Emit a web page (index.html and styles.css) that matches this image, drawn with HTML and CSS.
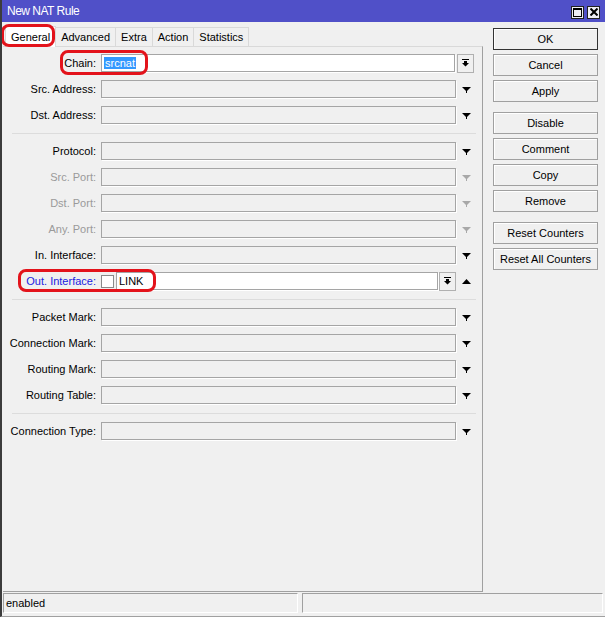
FILE: index.html
```html
<!DOCTYPE html>
<html lang="en">
<head>
    <meta charset="UTF-8">
    <title>New NAT Rule</title>
    <link rel="stylesheet" href="styles.css">
</head>
<body>
    <div class="window">
        <div class="titlebar">
            <span class="title">New NAT Rule</span>
            <div class="title-btns">
                <span class="tbtn">
                    <svg width="9" height="9" viewBox="0 0 9 9"><path d="M0 0h9v9H0z M1 2v6h7V2z" fill="#000" fill-rule="evenodd"/></svg>
                </span>
                <span class="tbtn">
                    <svg width="8" height="8" viewBox="0 0 8 8"><path d="M0.5 0.5l7 7M7.5 0.5l-7 7" stroke="#000" stroke-width="2"/></svg>
                </span>
            </div>
        </div>

        <div class="main">
            <div class="editor">
                <div class="tabs">
                    <span class="tab active">General</span>
                    <span class="tab">Advanced</span>
                    <span class="tab">Extra</span>
                    <span class="tab">Action</span>
                    <span class="tab">Statistics</span>
                </div>
                <div class="panel">
                    <div class="row">
                        <label>Chain:</label>
                        <div class="field wide">
                            <div class="box white"><span class="sel">srcnat</span></div>
                            <span class="drop-btn"><svg width="7" height="8" viewBox="0 0 7 8"><path d="M0 0h7v1H0z M2 2h3v2h2L3.5 7.5 0 4h2z"/></svg></span>
                        </div>
                    </div>
                    <div class="row">
                        <label>Src. Address:</label>
                        <div class="box"></div>
                        <span class="arrow"><svg width="9" height="6" viewBox="0 0 9 6"><path d="M0 0h9L5 4v2H4V4z"/></svg></span>
                    </div>
                    <div class="row">
                        <label>Dst. Address:</label>
                        <div class="box"></div>
                        <span class="arrow"><svg width="9" height="6" viewBox="0 0 9 6"><path d="M0 0h9L5 4v2H4V4z"/></svg></span>
                    </div>

                    <div class="sep"></div>

                    <div class="row">
                        <label>Protocol:</label>
                        <div class="box"></div>
                        <span class="arrow"><svg width="9" height="6" viewBox="0 0 9 6"><path d="M0 0h9L5 4v2H4V4z"/></svg></span>
                    </div>
                    <div class="row disabled">
                        <label>Src. Port:</label>
                        <div class="box"></div>
                        <span class="arrow"><svg width="9" height="6" viewBox="0 0 9 6"><path d="M0 0h9L5 4v2H4V4z"/></svg></span>
                    </div>
                    <div class="row disabled">
                        <label>Dst. Port:</label>
                        <div class="box"></div>
                        <span class="arrow"><svg width="9" height="6" viewBox="0 0 9 6"><path d="M0 0h9L5 4v2H4V4z"/></svg></span>
                    </div>
                    <div class="row disabled">
                        <label>Any. Port:</label>
                        <div class="box"></div>
                        <span class="arrow"><svg width="9" height="6" viewBox="0 0 9 6"><path d="M0 0h9L5 4v2H4V4z"/></svg></span>
                    </div>
                    <div class="row">
                        <label>In. Interface:</label>
                        <div class="box"></div>
                        <span class="arrow"><svg width="9" height="6" viewBox="0 0 9 6"><path d="M0 0h9L5 4v2H4V4z"/></svg></span>
                    </div>
                    <div class="row">
                        <label class="blue">Out. Interface:</label>
                        <div class="field">
                            <span class="check"></span>
                            <div class="box white">LINK</div>
                            <span class="drop-btn"><svg width="7" height="8" viewBox="0 0 7 8"><path d="M0 0h7v1H0z M2 2h3v2h2L3.5 7.5 0 4h2z"/></svg></span>
                        </div>
                        <span class="arrow"><svg width="9" height="6" viewBox="0 0 9 6"><path d="M4.5 0L9 5H0z"/></svg></span>
                    </div>

                    <div class="sep"></div>

                    <div class="row">
                        <label>Packet Mark:</label>
                        <div class="box"></div>
                        <span class="arrow"><svg width="9" height="6" viewBox="0 0 9 6"><path d="M0 0h9L5 4v2H4V4z"/></svg></span>
                    </div>
                    <div class="row">
                        <label>Connection Mark:</label>
                        <div class="box"></div>
                        <span class="arrow"><svg width="9" height="6" viewBox="0 0 9 6"><path d="M0 0h9L5 4v2H4V4z"/></svg></span>
                    </div>
                    <div class="row">
                        <label>Routing Mark:</label>
                        <div class="box"></div>
                        <span class="arrow"><svg width="9" height="6" viewBox="0 0 9 6"><path d="M0 0h9L5 4v2H4V4z"/></svg></span>
                    </div>
                    <div class="row">
                        <label>Routing Table:</label>
                        <div class="box"></div>
                        <span class="arrow"><svg width="9" height="6" viewBox="0 0 9 6"><path d="M0 0h9L5 4v2H4V4z"/></svg></span>
                    </div>

                    <div class="sep"></div>

                    <div class="row">
                        <label>Connection Type:</label>
                        <div class="box"></div>
                        <span class="arrow"><svg width="9" height="6" viewBox="0 0 9 6"><path d="M0 0h9L5 4v2H4V4z"/></svg></span>
                    </div>
                </div>
            </div>

            <div class="actions">
                <button class="btn default">OK</button>
                <button class="btn">Cancel</button>
                <button class="btn">Apply</button>
                <button class="btn group">Disable</button>
                <button class="btn">Comment</button>
                <button class="btn">Copy</button>
                <button class="btn">Remove</button>
                <button class="btn group">Reset Counters</button>
                <button class="btn">Reset All Counters</button>
            </div>
        </div>

        <div class="status">
            <div class="cell first">enabled</div>
            <div class="cell second"></div>
        </div>

        <!-- red highlight marks drawn over the screenshot -->
        <div class="mark mark-tab"></div>
        <div class="mark mark-chain"></div>
        <div class="mark mark-out"></div>
    </div>
</body>
</html>
```

FILE: styles.css
```css
body {
    margin: 0;
    font-family: "Liberation Sans", Arial, sans-serif;
    font-size: 11px;
    color: #000;
}
.window {
    position: relative;
    width: 605px;
    height: 617px;
    box-sizing: border-box;
    overflow: hidden;
    background-color: #f0f0f0;
    border-left: 2px solid #3c3c3c;
    border-bottom: 1px solid #a0a0a0;
}

/* title bar */
.titlebar {
    display: flex;
    align-items: center;
    height: 22px;
    margin-left: -2px;
    padding: 0 5px 0 7px;
    background-color: #5050c8;
    color: #fff;
}
.title {
    font-size: 12px;
    letter-spacing: -0.5px;
}
.title-btns {
    display: flex;
    gap: 3px;
    margin-left: auto;
    padding-top: 2px;
}
.tbtn {
    display: flex;
    align-items: center;
    justify-content: center;
    width: 11px;
    height: 11px;
    border: 1px solid #222;
    background-color: #eeeef4;
}

/* main area */
.main {
    display: flex;
    height: 570px;
}
.editor {
    width: 480px;
    margin-left: 1px;
    padding-top: 5px;
}
.tabs {
    display: flex;
    height: 19px;
    padding-left: 2px;
}
.tab {
    display: flex;
    align-items: center;
    padding: 0 5px;
    margin-right: -1px;
    border: 1px solid #d9d9d9;
    border-bottom: none;
    background-color: #f0f0f0;
}
.tab.active {
    position: relative;
    z-index: 1;
    height: 20px;
    margin-top: -1px;
    background-color: #fff;
}
.panel {
    height: 546px;
    box-sizing: border-box;
    padding-top: 3px;
    border-top: 1px solid #d9d9d9;
    border-right: 1px solid #a0a0a0;
    border-bottom: 1px solid #a0a0a0;
}

/* form rows */
.row {
    display: grid;
    grid-template-columns: 98px 355px 20px;
    align-items: center;
    height: 26px;
}
.row label {
    text-align: right;
    padding-right: 5px;
    white-space: nowrap;
}
.row label.blue {
    color: #1a1ae0;
}
.row.disabled label {
    color: #9a9a9a;
}
.row.disabled .arrow svg {
    fill: #a8a8a8;
}
.box {
    height: 18px;
    box-sizing: border-box;
    border: 1px solid #a5a5a5;
    background-color: #f0f0f0;
    box-shadow: 1px 1px 0 #fff;
    padding: 1px 2px;
    line-height: 14px;
}
.box.white {
    background-color: #fff;
}
.sel {
    background-color: #3399ff;
    color: #fff;
    padding: 0 1px;
}
.arrow {
    display: flex;
    justify-content: center;
    padding-top: 1px;
}
.field {
    display: flex;
    align-items: center;
}
.field .box {
    flex: 1;
}
.field.wide {
    grid-column: 2 / 4;
}
.field.wide .box {
    flex: none;
    width: 354px;
}
.drop-btn {
    display: flex;
    align-items: center;
    justify-content: center;
    width: 15px;
    height: 17px;
    margin-left: 2px;
    border: 1px solid #b0b0b0;
    background-color: #f0f0f0;
}
.field:not(.wide) .drop-btn {
    margin-left: 1px;
}
.check {
    width: 13px;
    height: 13px;
    box-sizing: border-box;
    margin-right: 2px;
    border: 1px solid #8a8a8a;
    background-color: #fff;
}
.sep {
    display: flex;
    align-items: center;
    height: 10px;
    padding: 0 6px 0 9px;
}
.sep::before {
    content: "";
    flex: 1;
    height: 1px;
    background-color: #dcdcdc;
}

/* buttons on the right */
.actions {
    display: flex;
    flex-direction: column;
    width: 105px;
    margin-left: 10px;
    padding-top: 6px;
}
.btn {
    height: 22px;
    margin-bottom: 4px;
    border: 1px solid #a0a0a0;
    background-color: #f0f0f0;
    box-shadow: inset 1px 1px 0 #fff;
    font-family: inherit;
    font-size: 11px;
    color: #000;
    padding: 0;
}
.btn.default {
    border-color: #333;
}
.btn.group {
    margin-top: 6px;
}

/* status bar */
.status {
    display: flex;
    padding-top: 1px;
}
.cell {
    height: 20px;
    box-sizing: border-box;
    border: 1px solid #a0a0a0;
    border-right-color: #fff;
    border-bottom-color: #fff;
    padding-left: 2px;
    line-height: 18px;
}
.cell.first {
    width: 295px;
    margin-left: 1px;
}
.cell.second {
    width: 301px;
    margin-left: 4px;
}

/* red highlight marks */
.mark {
    position: absolute;
    box-sizing: border-box;
    border: 3px solid #e3131b;
    border-radius: 8px;
    z-index: 2;
}
.mark-tab {
    left: -1px;
    top: 24px;
    width: 54px;
    height: 23px;
}
.mark-chain {
    left: 58px;
    top: 50px;
    width: 88px;
    height: 25px;
}
.mark-out {
    left: 16px;
    top: 269px;
    width: 138px;
    height: 23px;
}
```
